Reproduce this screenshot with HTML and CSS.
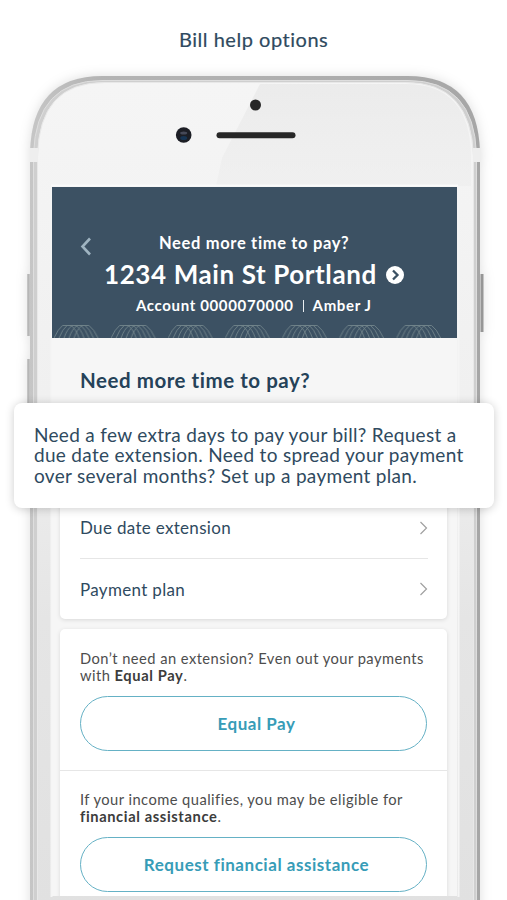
FILE: index.html
```
<!DOCTYPE html>
<html lang="en">
<head>
<meta charset="utf-8">
<title>Bill help options</title>
<link rel="stylesheet" href="styles.css">
</head>
<body>
<h1 class="page-title">Bill help options</h1>
<div class="device">
  <svg class="device-frame" width="470" height="834" viewBox="0 0 470 834" aria-hidden="true">
    <defs>
      <linearGradient id="edge" x1="0" x2="1" y1="0" y2="0">
        <stop offset="0" stop-color="#c6c6c6"/><stop offset=".15" stop-color="#b4b4b4"/><stop offset=".5" stop-color="#b0b0b0"/><stop offset=".85" stop-color="#aaa"/><stop offset="1" stop-color="#a6a6a6"/>
      </linearGradient>
      <linearGradient id="face" x1="0" x2="0" y1="0" y2="1">
        <stop offset="0" stop-color="#f5f5f5"/><stop offset=".35" stop-color="#f0f0f0"/><stop offset=".6" stop-color="#e5e5e5"/><stop offset="1" stop-color="#e0e0e0"/>
      </linearGradient>
      <linearGradient id="glare" x1="0" x2="0" y1="0" y2="1">
        <stop offset="0" stop-color="#e9e9e9" stop-opacity=".8"/><stop offset="1" stop-color="#ececec" stop-opacity=".5"/>
      </linearGradient>
    </defs>
    <path d="M8.500 198v62M8.500 283v70" stroke="#b6b6b6" stroke-width="2.500"/>
    <path d="M462 198v58" stroke="#969696" stroke-width="3"/>
    <path d="M10 900V76Q12 0 82 0H388Q458 0 460 76V900Z" fill="url(#edge)"/>
    <path d="M13.500 900V78Q16 4.500 82 4.500H388Q454 4.500 456.500 78V900Z" fill="#cfcfcf" stroke="#dedede" stroke-width="1"/>
    <path d="M17.500 900V80Q19 6.500 84 6.500H386Q451 6.500 453.500 80V900Z" fill="url(#face)" stroke="#e8e8e8"/>
    <path d="M240 8H386Q450 8 451 80V110H196L202 82Z" fill="url(#glare)"/>
    <path d="M10 72h8v14h-8zM453 72h8v14h-8z" fill="#eee"/>
    <path d="M31.500 110V821M438.500 110V821" stroke="#f5f5f5" stroke-width="2"/>
    <path d="M31 109.500H438" stroke="#fafafa" stroke-width="2"/>
    <circle cx="235.500" cy="29" r="5.500" fill="#272727"/>
    <circle cx="163.700" cy="59" r="7.800" fill="#1c1e25"/>
    <ellipse cx="163.700" cy="57" rx="3.500" ry="1.500" fill="#454958"/>
    <ellipse cx="163.700" cy="62" rx="3.500" ry="2" fill="#163453"/>
    <path d="M199.500 59.300h73" stroke="#272727" stroke-width="6" stroke-linecap="round"/>
  </svg>
  <main class="screen">
    <header class="account">
      <svg class="back" width="12" height="19" viewBox="0 0 12 19"><path d="M10 1.500 2.500 9.500l7.500 8" fill="none" stroke="#9fb4c1" stroke-width="2.600"/></svg>
      <div class="account-label">Need more time to pay?</div>
      <div class="account-address"><span>1234 Main St Portland</span>
        <svg width="18" height="18" viewBox="0 0 18 18"><circle cx="9" cy="9" r="9" fill="#fff"/><path d="M7 4.500 11.500 9 7 13.500" fill="none" stroke="#3c5163" stroke-width="2.300"/></svg>
      </div>
      <div class="account-detail"><span>Account 0000070000</span><i class="bar"></i><span>Amber J</span></div>
      <svg class="arches" width="405" height="14" viewBox="0 0 405 14">
        <defs>
          <pattern id="arch" x="2" width="57.100" height="14" patternUnits="userSpaceOnUse">
            <g fill="none" stroke="#71838a" stroke-width=".9">
              <path d="M0 14Q4 5 8.500 1.500H17Q22 5 25 14"/><path d="M5 14Q8.500 5 13 1.500H22Q27 5 30 14"/><path d="M10 14Q13 5 18 1.500H27Q31.500 5 35 14"/><path d="M15 14Q18 5 23 1.500H31Q36 5 39.500 14"/><path d="M20 14Q23 5 28 1.500H35Q40 5 44 14"/>
            </g>
          </pattern>
        </defs>
        <rect width="400" height="14" fill="url(#arch)"/>
      </svg>
    </header>
    <h2 class="heading">Need more time to pay?</h2>
    <section class="card list">
      <a class="row"><span class="due">Due date extension</span><svg width="9" height="14" viewBox="0 0 9 14"><path d="M1.500 1 7.500 7l-6 6" fill="none" stroke="#a0a0a0" stroke-width="1.200"/></svg></a>
      <a class="row"><span class="plan">Payment plan</span><svg width="9" height="14" viewBox="0 0 9 14"><path d="M1.500 1 7.500 7l-6 6" fill="none" stroke="#a0a0a0" stroke-width="1.200"/></svg></a>
    </section>
    <section class="card">
      <div class="offer">
        <p><span class="tight">Don’t need an extension? Even out your payments</span><br>with <b>Equal Pay</b>.</p>
        <a class="button">Equal Pay</a>
      </div>
      <div class="offer">
        <p>If your income qualifies, you may be eligible for<br><b>financial assistance</b>.</p>
        <a class="button">Request financial assistance</a>
      </div>
    </section>
  </main>
  <aside class="callout">Need a few extra days to pay your bill? Request a<br>due date extension. Need to spread your payment<br>over several months? Set up a payment plan.</aside>
</div>
</body>
</html>
```
FILE: styles.css
```
* { box-sizing: border-box; }
html, body { height: 900px; overflow: hidden; }
body {
  margin: 0;
  background: #fff;
  color: #2f4a60;
  font-family: Lato, "Liberation Sans", sans-serif;
  font-variant-ligatures: none;
  white-space: nowrap;
}
h1, h2, p { margin: 0; }

.page-title {
  height: 76px;
  padding: 27px 0 0 179px;
  font-size: 20px;
  line-height: 24px;
  font-weight: 400;
  letter-spacing: .52px;
  -webkit-text-stroke: .2px #2f4a60;
}
.device { position: relative; height: 824px; padding: 111px 50px 0 52px; }
.device-frame {
  position: absolute;
  left: 20px;
  top: 0;
  overflow: visible;
  filter: drop-shadow(0 0 6px rgba(0, 0, 0, .13));
}
.screen {
  position: relative;
  width: 405px;
  height: 709px;
  overflow: hidden;
  background: #f6f6f6;
}

.account {
  position: relative;
  height: 151px;
  padding-top: 46px;
  background: #3c5163;
  color: #fff;
}
.back { position: absolute; left: 28px; top: 50px; }
.account-label {
  padding-left: 107px;
  font-size: 16.5px;
  line-height: 20px;
  font-weight: 700;
  letter-spacing: .66px;
}
.account-address {
  display: flex;
  align-items: center;
  gap: 9px;
  margin-top: 6px;
  padding-left: 52px;
  font-size: 26px;
  line-height: 31px;
  font-weight: 700;
  letter-spacing: .6px;
}
.account-detail {
  display: flex;
  align-items: center;
  margin-top: 6px;
  padding-left: 84px;
  font-size: 15px;
  line-height: 18px;
  font-weight: 700;
  letter-spacing: .64px;
}
.bar { width: 1px; height: 12px; margin: 1px 9px 0; background: #e9eef1; }
.arches { position: absolute; left: 0; bottom: 0; }

.heading {
  padding: 29.500px 0 0 28px;
  font-size: 20.5px;
  line-height: 24px;
  font-weight: 700;
  letter-spacing: .54px;
  color: #254259;
}
.card {
  width: 387px;
  margin: 10px 0 0 8px;
  border-radius: 5px;
  background: #fff;
  box-shadow: 0 1px 4px rgba(0, 0, 0, .12);
}
.list { margin-top: 18.500px; height: 209px; padding: 87px 19px 0 20px; }
.row {
  display: flex;
  align-items: center;
  justify-content: space-between;
  height: 61px;
  font-size: 17px;
}
.row + .row { border-top: 1px solid #e6e6e6; }
.due { letter-spacing: .32px; }
.plan { letter-spacing: .32px; }

.offer { padding: 20.500px 20px 19px; }
.offer + .offer { padding-top: 20px; border-top: 1px solid #e6e6e6; }
.offer p {
  font-size: 14.7px;
  line-height: 17.5px;
  letter-spacing: .45px;
  color: #4d4d4d;
}
.offer b { letter-spacing: .62px; color: #3c3c3c; }
.offer .tight { letter-spacing: .45px; }
.button {
  display: flex;
  align-items: center;
  justify-content: center;
  width: 347px;
  height: 55px;
  margin-top: 11px;
  padding-left: 6px;
  border: 1.5px solid #65b1c5;
  border-radius: 28px;
  font-size: 17px;
  font-weight: 700;
  letter-spacing: .53px;
  color: #379cb7;
}

.callout {
  position: absolute;
  left: 14px;
  top: 327px;
  width: 480px;
  height: 105px;
  padding: 21.500px 20px;
  border-radius: 8px;
  background: #fff;
  box-shadow: 0 1px 10px rgba(0, 0, 0, .2);
  font-size: 19px;
  line-height: 20.5px;
  letter-spacing: .31px;
}
```
